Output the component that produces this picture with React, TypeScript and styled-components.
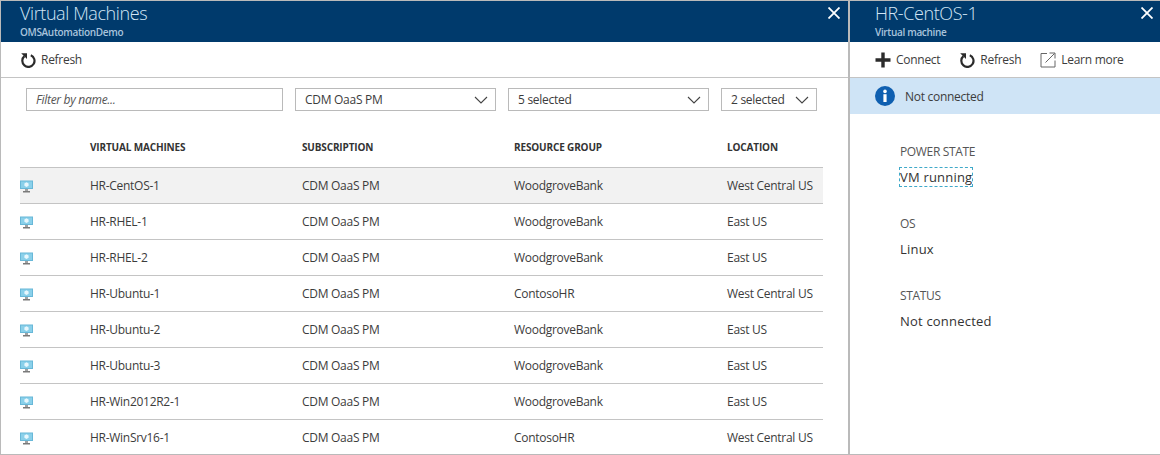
import styled, { createGlobalStyle } from 'styled-components'

const GlobalStyle = createGlobalStyle`
    html, body {
        margin: 0;
        padding: 0;
        background: #fff;
    }
`

const Page = styled.div`
    width: 1160px;
    height: 455px;
    box-sizing: border-box;
    display: flex;
    overflow: hidden;
    border: solid #bababa;
    border-width: 1px 0 1px 1px;
    font-family: "Open Sans", "Liberation Sans", sans-serif;
    font-size: 12px;
    color: #3c3c3c;
    letter-spacing: -0.28px;
`

const Blade = styled.section<{ $width: number }>`
    width: ${({ $width }) => $width}px;
    flex: none;
    display: flex;
    flex-direction: column;
    overflow: hidden;
`

const Divider = styled.div`
    width: 2px;
    flex: none;
    background: #bababa;
`

const Header = styled.header<{ $left: number }>`
    height: 41px;
    flex: none;
    box-sizing: border-box;
    background: #003a6c;
    padding: 0 0 0 ${({ $left }) => $left}px;
    position: relative;
`

const Title = styled.h1`
    margin: 0;
    padding-top: 1px;
    height: 23px;
    font-size: 18px;
    line-height: 22px;
    font-weight: 300;
    color: #d3e6f6;
    letter-spacing: -0.4px;
`

const Subtitle = styled.div`
    margin-top: 1px;
    font-size: 10px;
    line-height: 12px;
    font-weight: 600;
    color: #a9c4dc;
    letter-spacing: -0.33px;
`

const Close = styled.svg<{ $right: number }>`
    position: absolute;
    top: 6px;
    right: ${({ $right }) => $right}px;
    width: 12px;
    height: 12px;
`

const Toolbar = styled.div<{ $left: number; $gap: number }>`
    height: 36px;
    flex: none;
    box-sizing: border-box;
    display: flex;
    align-items: center;
    gap: ${({ $gap }) => $gap}px;
    padding-left: ${({ $left }) => $left}px;
    border-bottom: 1px solid #c4c4c4;
`

const ToolButton = styled.div`
    display: flex;
    align-items: center;
    gap: 5px;
`

const ToolIcon = styled.svg`
    width: 16px;
    height: 16px;
    flex: none;
`

const Filters = styled.div`
    display: flex;
    gap: 12px;
    padding: 10px 0 0 25px;
    flex: none;
`

const FilterBox = styled.div<{ $width: number }>`
    width: ${({ $width }) => $width}px;
    height: 23px;
    box-sizing: border-box;
    border: 1px solid #bababa;
    display: flex;
    align-items: center;
    justify-content: space-between;
    padding: 0 7px 0 9px;
`

const Placeholder = styled.span`
    font-style: italic;
    color: #555;
`

const Chevron = styled.svg`
    width: 14px;
    height: 8px;
    flex: none;
`

const Table = styled.div`
    margin-left: 19px;
    width: 803px;
    flex: none;
`

const HeadRow = styled.div`
    display: grid;
    grid-template-columns: 70px 212px 212px 213px 1fr;
    height: 56px;
    align-items: end;
    padding-bottom: 13px;
    box-sizing: border-box;
    font-size: 10px;
    font-weight: 700;
    color: #333;
    letter-spacing: -0.15px;
`

const Row = styled.div<{ $selected?: boolean }>`
    display: grid;
    grid-template-columns: 70px 212px 212px 213px 1fr;
    height: 36px;
    box-sizing: border-box;
    align-items: center;
    border-top: 1px solid #c4c4c4;
    background: ${({ $selected }) => ($selected ? '#f2f2f2' : 'transparent')};
`

const VmIcon = styled.svg`
    width: 13px;
    height: 13px;
    display: block;
    margin-top: 2px;
`

const Notice = styled.div`
    height: 36px;
    flex: none;
    display: flex;
    align-items: center;
    gap: 10px;
    padding-left: 25px;
    background: #cfe4f6;
`

const Properties = styled.div`
    padding: 29px 0 0 50px;
    display: flex;
    flex-direction: column;
    gap: 29px;
`

const Property = styled.div`
    display: flex;
    flex-direction: column;
    align-items: flex-start;
    gap: 8px;
`

const Label = styled.div`
    line-height: 17px;
    color: #555;
    letter-spacing: -0.35px;
`

const Value = styled.div<{ $focused?: boolean }>`
    line-height: 18px;
    font-size: 13px;
    color: #333;
    letter-spacing: 0.2px;
    outline: ${({ $focused }) => ($focused ? '1px dashed #3fa9c9' : 'none')};
`

const machines = [
    ['HR-CentOS-1', 'WoodgroveBank', 'West Central US'],
    ['HR-RHEL-1', 'WoodgroveBank', 'East US'],
    ['HR-RHEL-2', 'WoodgroveBank', 'East US'],
    ['HR-Ubuntu-1', 'ContosoHR', 'West Central US'],
    ['HR-Ubuntu-2', 'WoodgroveBank', 'East US'],
    ['HR-Ubuntu-3', 'WoodgroveBank', 'East US'],
    ['HR-Win2012R2-1', 'WoodgroveBank', 'East US'],
    ['HR-WinSrv16-1', 'ContosoHR', 'West Central US'],
]

const properties = [
    ['POWER STATE', 'VM running'],
    ['OS', 'Linux'],
    ['STATUS', 'Not connected'],
]

function CloseIcon({ right }: { right: number }) {
    return (
        <Close $right={right} viewBox="0 0 12 12">
            <path d="M0.5 0.5 L11.5 11.5 M11.5 0.5 L0.5 11.5" stroke="#fff" strokeWidth="1.8" fill="none" />
        </Close>
    )
}

function RefreshIcon() {
    return (
        <ToolIcon viewBox="0 0 16 16">
            <path d="M4.4 4.2 A6.1 6.1 0 1 0 10.8 3.2" stroke="#2b2b2b" strokeWidth="2.2" fill="none" />
            <path d="M1.2 1.2 L7 1.2 L7 7 Z" fill="#2b2b2b" />
        </ToolIcon>
    )
}

function ChevronIcon() {
    return (
        <Chevron viewBox="0 0 14 8">
            <path d="M1 1 L7 7 L13 1" stroke="#444" strokeWidth="1.1" fill="none" />
        </Chevron>
    )
}

function MonitorIcon() {
    return (
        <VmIcon viewBox="0 0 13 13">
            <rect x="0" y="0.5" width="13" height="8.5" fill="#68b8d8" />
            <rect x="1" y="1.5" width="11" height="6.5" fill="#8ad0ea" />
            <path d="M6.5 2.2 L8.6 3.4 L8.6 5.8 L6.5 7 L4.4 5.8 L4.4 3.4 Z" fill="#e8f7fd" />
            <rect x="5" y="9" width="3" height="2" fill="#a0a1a2" />
            <rect x="3" y="11" width="7" height="1.5" fill="#7a7a7a" />
        </VmIcon>
    )
}

export default function App() {
    return (
        <>
            <GlobalStyle />
            <Page>
                <Blade $width={847}>
                    <Header $left={19}>
                        <Title>Virtual Machines</Title>
                        <Subtitle>OMSAutomationDemo</Subtitle>
                        <CloseIcon right={8} />
                    </Header>
                    <Toolbar $left={19} $gap={0}>
                        <ToolButton>
                            <RefreshIcon />
                            Refresh
                        </ToolButton>
                    </Toolbar>
                    <Filters>
                        <FilterBox $width={257}>
                            <Placeholder>Filter by name...</Placeholder>
                        </FilterBox>
                        <FilterBox $width={201}>
                            CDM OaaS PM
                            <ChevronIcon />
                        </FilterBox>
                        <FilterBox $width={201}>
                            5 selected
                            <ChevronIcon />
                        </FilterBox>
                        <FilterBox $width={96}>
                            2 selected
                            <ChevronIcon />
                        </FilterBox>
                    </Filters>
                    <Table>
                        <HeadRow>
                            <span />
                            <span>VIRTUAL MACHINES</span>
                            <span>SUBSCRIPTION</span>
                            <span>RESOURCE GROUP</span>
                            <span>LOCATION</span>
                        </HeadRow>
                        {machines.map(([name, group, location], i) => (
                            <Row key={name} $selected={i === 0}>
                                <MonitorIcon />
                                <span>{name}</span>
                                <span>CDM OaaS PM</span>
                                <span>{group}</span>
                                <span>{location}</span>
                            </Row>
                        ))}
                    </Table>
                </Blade>
                <Divider />
                <Blade $width={310}>
                    <Header $left={25}>
                        <Title>HR-CentOS-1</Title>
                        <Subtitle>Virtual machine</Subtitle>
                        <CloseIcon right={7} />
                    </Header>
                    <Toolbar $left={25} $gap={19}>
                        <ToolButton>
                            <ToolIcon viewBox="0 0 16 16">
                                <path d="M6.3 0.5 H9.7 V6.3 H15.5 V9.7 H9.7 V15.5 H6.3 V9.7 H0.5 V6.3 H6.3 Z" fill="#2b2b2b" />
                            </ToolIcon>
                            Connect
                        </ToolButton>
                        <ToolButton>
                            <RefreshIcon />
                            Refresh
                        </ToolButton>
                        <ToolButton>
                            <ToolIcon viewBox="0 0 16 16">
                                <path d="M7 1.5 H1 V15 H15 V8.5" stroke="#666" strokeWidth="1" fill="none" />
                                <path d="M5.5 10.5 L14.5 1.5 M9.5 1 H15 V6.5" stroke="#666" strokeWidth="1" fill="none" />
                            </ToolIcon>
                            Learn more
                        </ToolButton>
                    </Toolbar>
                    <Notice>
                        <svg width="20" height="20" viewBox="0 0 20 20">
                            <circle cx="10" cy="10" r="10" fill="#0f5fb0" />
                            <rect x="8.4" y="8.2" width="3.2" height="7.8" fill="#fff" />
                            <circle cx="10" cy="5.4" r="1.8" fill="#fff" />
                        </svg>
                        Not connected
                    </Notice>
                    <Properties>
                        {properties.map(([label, value], i) => (
                            <Property key={label}>
                                <Label>{label}</Label>
                                <Value $focused={i === 0}>{value}</Value>
                            </Property>
                        ))}
                    </Properties>
                </Blade>
            </Page>
        </>
    )
}
